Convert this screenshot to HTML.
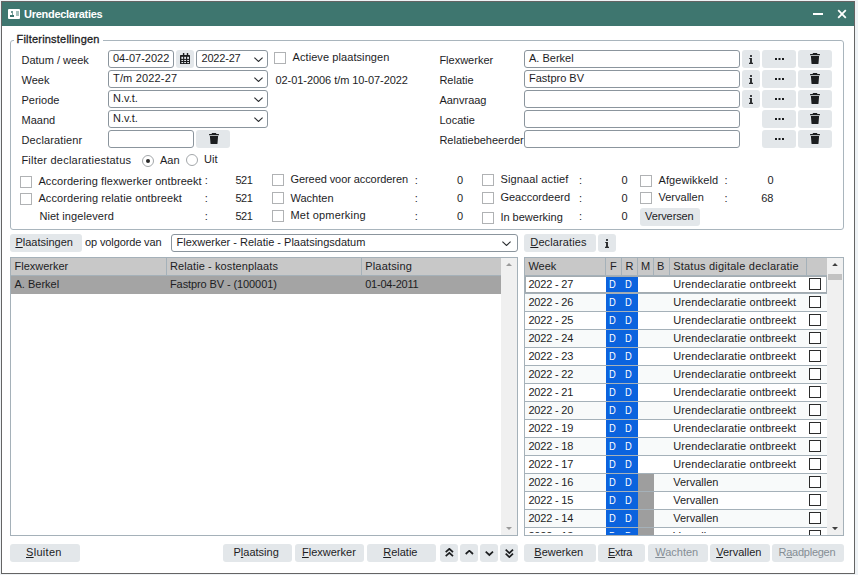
<!DOCTYPE html><html><head><meta charset="utf-8"><style>
html,body{margin:0;padding:0;}
body{width:858px;height:575px;position:relative;overflow:hidden;background:#eef2f5;font-family:"Liberation Sans",sans-serif;}
.win{position:absolute;left:1px;top:1px;width:852px;height:571px;border:1px solid #646464;background:#fff;}
.title{position:absolute;left:2px;top:2px;width:852px;height:24px;background:#3e766f;}
.t{position:absolute;font-size:11px;line-height:13px;white-space:nowrap;color:#1d1d1f;}
.b{font-weight:bold;}
.inp{position:absolute;box-sizing:border-box;border:1px solid #8b959d;border-radius:3px;background:#fff;}
.btn{position:absolute;box-sizing:border-box;background:#e3e7ea;border-radius:3px;}
.cb{position:absolute;box-sizing:border-box;border:1px solid #b0b2b4;background:#fff;}
.sv{position:absolute;}
.u{text-decoration:underline;text-underline-offset:1px;}
.dis{color:#858e95;}
.ln{position:absolute;background:#a5b1b9;}
.rad{position:absolute;box-sizing:border-box;width:12px;height:12px;border:1px solid #a3a7aa;border-radius:50%;background:#fff;}
</style></head><body>
<div class="win"></div>
<div class="title"></div>

<div style="position:absolute;left:8px;top:9px;width:12px;height:9.5px;background:#fff;border-radius:1px;"></div>
<div style="position:absolute;left:10.9px;top:11px;width:2.3px;height:2.3px;background:#3e766f;border-radius:50%;"></div>
<div style="position:absolute;left:11.5px;top:13px;width:1.2px;height:2.4px;background:#7fa39e;"></div>
<div style="position:absolute;left:10px;top:15.2px;width:4px;height:1.5px;background:#3e766f;"></div>
<div style="position:absolute;left:16.1px;top:11.3px;width:2.7px;height:4.4px;background:#a4c0bc;"></div>
<div class="t b" style="left:24px;top:8px;color:#fff;letter-spacing:-0.28px">Urendeclaraties</div>
<div style="position:absolute;left:813px;top:13px;width:10px;height:2px;background:#fff;"></div>
<svg class="sv" style="left:837px;top:9px" width="10" height="10" viewBox="0 0 10 10"><path d="M1.2 1.2L8.8 8.8M8.8 1.2L1.2 8.8" stroke="#fff" stroke-width="1.8"/></svg>
<div style="position:absolute;left:10px;top:40px;width:832px;height:188px;border:1px solid #a9b5bd;border-radius:3px;"></div>
<div style="position:absolute;left:14px;top:36px;width:89px;height:8px;background:#fff;"></div>
<div class="t " style="left:16.5px;top:33px;letter-spacing:0.2px;-webkit-text-stroke:0.3px #1d1d1f">Filterinstellingen</div>
<div class="t " style="left:21.5px;top:54px;">Datum / week</div>
<div class="t " style="left:21.5px;top:74px;">Week</div>
<div class="t " style="left:21.5px;top:94px;">Periode</div>
<div class="t " style="left:21.5px;top:114px;">Maand</div>
<div class="t " style="left:21.5px;top:134px;letter-spacing:0.12px">Declaratienr</div>
<div class="inp" style="left:108px;top:50px;width:66px;height:18px;"></div>
<div class="t " style="left:113px;top:52px;">04-07-2022</div>
<div class="btn" style="left:176px;top:50px;width:18px;height:18px;"></div>
<svg class="sv" style="left:180px;top:53px" width="10" height="11" viewBox="0 0 10 11"><rect x="0" y="2" width="10" height="9" rx="0.6" fill="#1b1d1f"/><rect x="2.9" y="0" width="1.4" height="2.5" fill="#1b1d1f"/><rect x="6.8" y="0" width="1.4" height="2.5" fill="#1b1d1f"/><g fill="#e3e7ea"><rect x="1.4" y="3.8" width="1.7" height="2.1"/><rect x="1.4" y="6.9" width="1.7" height="1.1"/><rect x="1.4" y="9" width="1.7" height="1.1"/><rect x="4.2" y="3.8" width="1.8" height="2.1"/><rect x="4.2" y="6.9" width="1.8" height="1.1"/><rect x="4.2" y="9" width="1.8" height="1.1"/><rect x="7.2" y="3.8" width="1.8" height="2.1"/><rect x="7.2" y="6.9" width="1.8" height="1.1"/><rect x="7.2" y="9" width="1.8" height="1.1"/></g></svg>
<div class="inp" style="left:196px;top:50px;width:72px;height:18px;"></div>
<div class="t " style="left:201.5px;top:52px;letter-spacing:-0.2px">2022-27</div>
<svg class="sv" style="left:254px;top:57px" width="9" height="5" viewBox="0 0 9 5"><path d="M0.4 0.6L4.5 4.5L8.6 0.6" fill="none" stroke="#2a2d30" stroke-width="1.1"/></svg>
<div class="inp" style="left:108px;top:70px;width:160px;height:18px;"></div>
<div class="t " style="left:113px;top:72px;letter-spacing:0.17px">T/m 2022-27</div>
<svg class="sv" style="left:254px;top:77px" width="9" height="5" viewBox="0 0 9 5"><path d="M0.4 0.6L4.5 4.5L8.6 0.6" fill="none" stroke="#2a2d30" stroke-width="1.1"/></svg>
<div class="inp" style="left:108px;top:90px;width:160px;height:18px;"></div>
<div class="t " style="left:113px;top:92px;">N.v.t.</div>
<svg class="sv" style="left:254px;top:97px" width="9" height="5" viewBox="0 0 9 5"><path d="M0.4 0.6L4.5 4.5L8.6 0.6" fill="none" stroke="#2a2d30" stroke-width="1.1"/></svg>
<div class="inp" style="left:108px;top:110px;width:160px;height:18px;"></div>
<div class="t " style="left:113px;top:112px;">N.v.t.</div>
<svg class="sv" style="left:254px;top:117px" width="9" height="5" viewBox="0 0 9 5"><path d="M0.4 0.6L4.5 4.5L8.6 0.6" fill="none" stroke="#2a2d30" stroke-width="1.1"/></svg>
<div class="inp" style="left:108px;top:130px;width:86px;height:18px;"></div>
<div class="btn" style="left:196px;top:130px;width:34px;height:18px;"></div>
<svg class="sv" style="left:208.5px;top:133px" width="10" height="11" viewBox="0 0 10 11"><path d="M3.3 0.1h3.4a0.6 0.6 0 0 1 0.6 0.6V1.1H9.6a0.4 0.4 0 0 1 0.4 0.4V2.3H0V1.5a0.4 0.4 0 0 1 0.4-0.4H2.7V0.7a0.6 0.6 0 0 1 0.6-0.6z M0.9 3H9.1L8.5 10.4a0.7 0.7 0 0 1-0.7 0.6H2.2a0.7 0.7 0 0 1-0.7-0.6z" fill="#1b1d1f"/></svg>
<div class="cb" style="left:274px;top:52px;width:12px;height:12px;"></div>
<div class="t " style="left:292.5px;top:51px;letter-spacing:0.08px">Actieve plaatsingen</div>
<div class="t " style="left:275.5px;top:74px;letter-spacing:-0.06px">02-01-2006 t/m 10-07-2022</div>
<div class="t " style="left:439.4px;top:54px;">Flexwerker</div>
<div class="inp" style="left:524px;top:50px;width:216px;height:18px;"></div>
<div class="btn" style="left:742px;top:50px;width:18px;height:18px;"></div>
<svg class="sv" style="left:749px;top:55px" width="4" height="9" viewBox="0 0 4 9"><rect x="1" y="0" width="2" height="2" fill="#404347"/><rect x="0" y="3" width="2" height="1" fill="#505357"/><rect x="1.1" y="3" width="1.8" height="6" fill="#1b1d1f"/><rect x="0" y="7.7" width="4" height="1.3" fill="#2a2c2f"/></svg>
<div class="btn" style="left:762px;top:50px;width:34px;height:18px;"></div>
<svg class="sv" style="left:775px;top:58px" width="9" height="2" viewBox="0 0 9 2"><rect x="0" y="0" width="2" height="2" fill="#1b1d1f"/><rect x="3.5" y="0" width="2" height="2" fill="#1b1d1f"/><rect x="7" y="0" width="2" height="2" fill="#1b1d1f"/></svg>
<div class="btn" style="left:798px;top:50px;width:34px;height:18px;"></div>
<svg class="sv" style="left:810px;top:53px" width="10" height="11" viewBox="0 0 10 11"><path d="M3.3 0.1h3.4a0.6 0.6 0 0 1 0.6 0.6V1.1H9.6a0.4 0.4 0 0 1 0.4 0.4V2.3H0V1.5a0.4 0.4 0 0 1 0.4-0.4H2.7V0.7a0.6 0.6 0 0 1 0.6-0.6z M0.9 3H9.1L8.5 10.4a0.7 0.7 0 0 1-0.7 0.6H2.2a0.7 0.7 0 0 1-0.7-0.6z" fill="#1b1d1f"/></svg>
<div class="t " style="left:439.4px;top:74px;">Relatie</div>
<div class="inp" style="left:524px;top:70px;width:216px;height:18px;"></div>
<div class="btn" style="left:742px;top:70px;width:18px;height:18px;"></div>
<svg class="sv" style="left:749px;top:75px" width="4" height="9" viewBox="0 0 4 9"><rect x="1" y="0" width="2" height="2" fill="#404347"/><rect x="0" y="3" width="2" height="1" fill="#505357"/><rect x="1.1" y="3" width="1.8" height="6" fill="#1b1d1f"/><rect x="0" y="7.7" width="4" height="1.3" fill="#2a2c2f"/></svg>
<div class="btn" style="left:762px;top:70px;width:34px;height:18px;"></div>
<svg class="sv" style="left:775px;top:78px" width="9" height="2" viewBox="0 0 9 2"><rect x="0" y="0" width="2" height="2" fill="#1b1d1f"/><rect x="3.5" y="0" width="2" height="2" fill="#1b1d1f"/><rect x="7" y="0" width="2" height="2" fill="#1b1d1f"/></svg>
<div class="btn" style="left:798px;top:70px;width:34px;height:18px;"></div>
<svg class="sv" style="left:810px;top:73px" width="10" height="11" viewBox="0 0 10 11"><path d="M3.3 0.1h3.4a0.6 0.6 0 0 1 0.6 0.6V1.1H9.6a0.4 0.4 0 0 1 0.4 0.4V2.3H0V1.5a0.4 0.4 0 0 1 0.4-0.4H2.7V0.7a0.6 0.6 0 0 1 0.6-0.6z M0.9 3H9.1L8.5 10.4a0.7 0.7 0 0 1-0.7 0.6H2.2a0.7 0.7 0 0 1-0.7-0.6z" fill="#1b1d1f"/></svg>
<div class="t " style="left:439.4px;top:94px;">Aanvraag</div>
<div class="inp" style="left:524px;top:90px;width:216px;height:18px;"></div>
<div class="btn" style="left:742px;top:90px;width:18px;height:18px;"></div>
<svg class="sv" style="left:749px;top:95px" width="4" height="9" viewBox="0 0 4 9"><rect x="1" y="0" width="2" height="2" fill="#404347"/><rect x="0" y="3" width="2" height="1" fill="#505357"/><rect x="1.1" y="3" width="1.8" height="6" fill="#1b1d1f"/><rect x="0" y="7.7" width="4" height="1.3" fill="#2a2c2f"/></svg>
<div class="btn" style="left:762px;top:90px;width:34px;height:18px;"></div>
<svg class="sv" style="left:775px;top:98px" width="9" height="2" viewBox="0 0 9 2"><rect x="0" y="0" width="2" height="2" fill="#1b1d1f"/><rect x="3.5" y="0" width="2" height="2" fill="#1b1d1f"/><rect x="7" y="0" width="2" height="2" fill="#1b1d1f"/></svg>
<div class="btn" style="left:798px;top:90px;width:34px;height:18px;"></div>
<svg class="sv" style="left:810px;top:93px" width="10" height="11" viewBox="0 0 10 11"><path d="M3.3 0.1h3.4a0.6 0.6 0 0 1 0.6 0.6V1.1H9.6a0.4 0.4 0 0 1 0.4 0.4V2.3H0V1.5a0.4 0.4 0 0 1 0.4-0.4H2.7V0.7a0.6 0.6 0 0 1 0.6-0.6z M0.9 3H9.1L8.5 10.4a0.7 0.7 0 0 1-0.7 0.6H2.2a0.7 0.7 0 0 1-0.7-0.6z" fill="#1b1d1f"/></svg>
<div class="t " style="left:439.4px;top:114px;">Locatie</div>
<div class="inp" style="left:524px;top:110px;width:216px;height:18px;"></div>
<div class="btn" style="left:762px;top:110px;width:34px;height:18px;"></div>
<svg class="sv" style="left:775px;top:118px" width="9" height="2" viewBox="0 0 9 2"><rect x="0" y="0" width="2" height="2" fill="#1b1d1f"/><rect x="3.5" y="0" width="2" height="2" fill="#1b1d1f"/><rect x="7" y="0" width="2" height="2" fill="#1b1d1f"/></svg>
<div class="btn" style="left:798px;top:110px;width:34px;height:18px;"></div>
<svg class="sv" style="left:810px;top:113px" width="10" height="11" viewBox="0 0 10 11"><path d="M3.3 0.1h3.4a0.6 0.6 0 0 1 0.6 0.6V1.1H9.6a0.4 0.4 0 0 1 0.4 0.4V2.3H0V1.5a0.4 0.4 0 0 1 0.4-0.4H2.7V0.7a0.6 0.6 0 0 1 0.6-0.6z M0.9 3H9.1L8.5 10.4a0.7 0.7 0 0 1-0.7 0.6H2.2a0.7 0.7 0 0 1-0.7-0.6z" fill="#1b1d1f"/></svg>
<div class="t " style="left:439.4px;top:134px;">Relatiebeheerder</div>
<div class="inp" style="left:524px;top:130px;width:216px;height:18px;"></div>
<div class="btn" style="left:762px;top:130px;width:34px;height:18px;"></div>
<svg class="sv" style="left:775px;top:138px" width="9" height="2" viewBox="0 0 9 2"><rect x="0" y="0" width="2" height="2" fill="#1b1d1f"/><rect x="3.5" y="0" width="2" height="2" fill="#1b1d1f"/><rect x="7" y="0" width="2" height="2" fill="#1b1d1f"/></svg>
<div class="btn" style="left:798px;top:130px;width:34px;height:18px;"></div>
<svg class="sv" style="left:810px;top:133px" width="10" height="11" viewBox="0 0 10 11"><path d="M3.3 0.1h3.4a0.6 0.6 0 0 1 0.6 0.6V1.1H9.6a0.4 0.4 0 0 1 0.4 0.4V2.3H0V1.5a0.4 0.4 0 0 1 0.4-0.4H2.7V0.7a0.6 0.6 0 0 1 0.6-0.6z M0.9 3H9.1L8.5 10.4a0.7 0.7 0 0 1-0.7 0.6H2.2a0.7 0.7 0 0 1-0.7-0.6z" fill="#1b1d1f"/></svg>
<div class="t " style="left:529px;top:52px;">A. Berkel</div>
<div class="t " style="left:529px;top:72px;">Fastpro BV</div>
<div class="t " style="left:21.4px;top:154px;letter-spacing:0.23px">Filter declaratiestatus</div>
<div class="rad" style="left:142px;top:155px;"></div>
<div style="position:absolute;left:145.8px;top:158.8px;width:4.4px;height:4.4px;border-radius:50%;background:#2a2a2a;"></div>
<div class="t " style="left:160px;top:154px;">Aan</div>
<div class="rad" style="left:186px;top:154px;"></div>
<div class="t " style="left:204px;top:153px;">Uit</div>
<div class="cb" style="left:20px;top:176px;width:12px;height:12px;"></div>
<div class="t " style="left:38.4px;top:175px;letter-spacing:0.08px">Accordering flexwerker ontbreekt</div>
<div class="cb" style="left:20px;top:193px;width:12px;height:12px;"></div>
<div class="t " style="left:38.4px;top:192px;letter-spacing:0.1px">Accordering relatie ontbreekt</div>
<div class="t " style="left:39.4px;top:210px;letter-spacing:0.07px">Niet ingeleverd</div>
<div class="t " style="left:204.7px;top:174px;">:</div>
<div class="t " style="left:235.5px;top:174px;letter-spacing:-0.5px">521</div>
<div class="t " style="left:204.7px;top:192px;">:</div>
<div class="t " style="left:235.5px;top:192px;letter-spacing:-0.5px">521</div>
<div class="t " style="left:204.7px;top:210px;">:</div>
<div class="t " style="left:235.5px;top:210px;letter-spacing:-0.5px">521</div>
<div class="cb" style="left:272px;top:174px;width:12px;height:12px;"></div>
<div class="t " style="left:290.5px;top:173px;letter-spacing:-0.08px">Gereed voor accorderen</div>
<div class="t " style="left:414.7px;top:174px;">:</div>
<div class="t " style="left:457px;top:174px;">0</div>
<div class="cb" style="left:272px;top:192px;width:12px;height:12px;"></div>
<div class="t " style="left:290.5px;top:192px;">Wachten</div>
<div class="t " style="left:414.7px;top:192px;">:</div>
<div class="t " style="left:457px;top:192px;">0</div>
<div class="cb" style="left:272px;top:210px;width:12px;height:12px;"></div>
<div class="t " style="left:290.5px;top:209px;letter-spacing:0.2px">Met opmerking</div>
<div class="t " style="left:414.7px;top:210px;">:</div>
<div class="t " style="left:457px;top:210px;">0</div>
<div class="cb" style="left:482px;top:174px;width:12px;height:12px;"></div>
<div class="t " style="left:500.4px;top:173px;letter-spacing:0.15px">Signaal actief</div>
<div class="t " style="left:578.9px;top:174px;">:</div>
<div class="t " style="left:621.5px;top:174px;">0</div>
<div class="cb" style="left:482px;top:192px;width:12px;height:12px;"></div>
<div class="t " style="left:500.4px;top:191px;">Geaccordeerd</div>
<div class="t " style="left:578.9px;top:192px;">:</div>
<div class="t " style="left:621.5px;top:192px;">0</div>
<div class="cb" style="left:482px;top:212px;width:12px;height:12px;"></div>
<div class="t " style="left:500.4px;top:211px;">In bewerking</div>
<div class="t " style="left:578.9px;top:210px;">:</div>
<div class="t " style="left:621.5px;top:210px;">0</div>
<div class="cb" style="left:640px;top:175px;width:12px;height:12px;"></div>
<div class="t " style="left:658.5px;top:174px;letter-spacing:0.1px">Afgewikkeld</div>
<div class="t " style="left:724.5px;top:174px;">:</div>
<div class="t" style="left:700px;width:73.5px;text-align:right;top:174px">0</div>
<div class="cb" style="left:640px;top:192px;width:12px;height:12px;"></div>
<div class="t " style="left:658.5px;top:191px;">Vervallen</div>
<div class="t " style="left:724.5px;top:192px;">:</div>
<div class="t" style="left:700px;width:73.5px;text-align:right;top:192px">68</div>
<div class="btn" style="left:640px;top:208px;width:60px;height:18px;"></div>
<div class="t " style="left:645px;top:210px;letter-spacing:-0.1px">Verversen</div>
<div class="btn" style="left:10px;top:234px;width:72px;height:18px;"></div>
<div class="t " style="left:15.4px;top:236px;"><span class="u">P</span>laatsingen</div>
<div class="t " style="left:85px;top:236px;letter-spacing:-0.12px">op volgorde van</div>
<div class="inp" style="left:171px;top:234px;width:347px;height:18px;"></div>
<div class="t " style="left:176.5px;top:236px;">Flexwerker - Relatie - Plaatsingsdatum</div>
<svg class="sv" style="left:502px;top:241px" width="9" height="5" viewBox="0 0 9 5"><path d="M0.4 0.6L4.5 4.5L8.6 0.6" fill="none" stroke="#2a2d30" stroke-width="1.1"/></svg>
<div class="btn" style="left:524px;top:234px;width:72px;height:18px;"></div>
<div class="t " style="left:530.3px;top:236px;letter-spacing:0.13px"><span class="u">D</span>eclaraties</div>
<div class="btn" style="left:598px;top:234px;width:18px;height:18px;"></div>
<svg class="sv" style="left:605px;top:239px" width="4" height="9" viewBox="0 0 4 9"><rect x="1" y="0" width="2" height="2" fill="#404347"/><rect x="0" y="3" width="2" height="1" fill="#505357"/><rect x="1.1" y="3" width="1.8" height="6" fill="#1b1d1f"/><rect x="0" y="7.7" width="4" height="1.3" fill="#2a2c2f"/></svg>
<div style="position:absolute;left:10px;top:257px;width:506px;height:277px;border:1px solid #a5b1b9;background:#fff;"></div>
<div style="position:absolute;left:11px;top:258px;width:490px;height:17px;background:#c8c8c8;"></div>
<div class="ln" style="left:166px;top:258px;width:1px;height:17px;"></div>
<div class="ln" style="left:361px;top:258px;width:1px;height:17px;"></div>
<div style="position:absolute;left:501px;top:258px;width:16px;height:277px;background:#f0f0f0;"></div>
<div style="position:absolute;left:11px;top:276px;width:490px;height:18px;background:#a4a4a4;"></div>
<div class="ln" style="left:11px;top:275px;width:490px;height:1px;"></div>
<div class="t " style="left:14.5px;top:260px;">Flexwerker</div>
<div class="t " style="left:170px;top:260px;letter-spacing:0.1px">Relatie - kostenplaats</div>
<div class="t " style="left:365.2px;top:260px;letter-spacing:0.18px">Plaatsing</div>
<div class="t " style="left:14.5px;top:278px;">A. Berkel</div>
<div class="t " style="left:170px;top:278px;letter-spacing:-0.1px">Fastpro BV - (100001)</div>
<div class="t " style="left:365.2px;top:278px;letter-spacing:-0.22px">01-04-2011</div>
<svg class="sv" style="left:505.5px;top:263px" width="6" height="3"><path d="M0 3L3 0L6 3z" fill="#9a9a9a"/></svg>
<svg class="sv" style="left:505.5px;top:527px" width="6" height="3"><path d="M0 0L3 3L6 0z" fill="#9a9a9a"/></svg>
<div style="position:absolute;left:524px;top:257px;width:318px;height:277px;border:1px solid #a5b1b9;background:#fff;overflow:hidden;"></div>
<div style="position:absolute;left:525px;top:258px;width:302px;height:17px;background:#c8c8c8;"></div>
<div class="ln" style="left:605px;top:258px;width:1px;height:17px;"></div>
<div class="ln" style="left:621px;top:258px;width:1px;height:17px;"></div>
<div class="ln" style="left:637px;top:258px;width:1px;height:17px;"></div>
<div class="ln" style="left:653px;top:258px;width:1px;height:17px;"></div>
<div class="ln" style="left:669px;top:258px;width:1px;height:17px;"></div>
<div class="ln" style="left:806px;top:258px;width:1px;height:17px;"></div>
<div style="position:absolute;left:827px;top:258px;width:16px;height:277px;background:#f0f0f0;"></div>
<svg class="sv" style="left:831.5px;top:263px" width="6" height="3.2"><path d="M0 3.2L3 0L6 3.2z" fill="#404040"/></svg>
<svg class="sv" style="left:831.5px;top:527px" width="6" height="3.2"><path d="M0 0L3 3.2L6 0z" fill="#404040"/></svg>
<div style="position:absolute;left:828px;top:274px;width:14px;height:6px;background:#c2c2c2;"></div>
<div class="t " style="left:528.4px;top:260px;">Week</div>
<div class="t " style="left:610px;top:260px;">F</div>
<div class="t " style="left:625.5px;top:260px;">R</div>
<div class="t " style="left:641px;top:260px;">M</div>
<div class="t " style="left:657px;top:260px;">B</div>
<div class="t " style="left:673.2px;top:260px;letter-spacing:0.22px">Status digitale declaratie</div>
<div class="ln" style="left:525px;top:275px;width:302px;height:1px;"></div>
<div style="position:absolute;left:525px;top:276px;width:302px;height:259px;overflow:hidden;">
<div class="ln" style="left:0;top:17px;width:302px;height:1px;"></div>
<div style="position:absolute;left:81px;top:1px;width:32px;height:15px;background:#0b63de;"></div>
<div style="position:absolute;left:284px;top:2px;width:12px;height:12px;box-sizing:border-box;border:1.5px solid #2b2b2b;background:#fff;"></div>
<div style="position:absolute;left:0;top:18px;width:302px;height:17px;background:#f8fafa;"></div>
<div class="ln" style="left:0;top:35px;width:302px;height:1px;"></div>
<div style="position:absolute;left:81px;top:18px;width:32px;height:17px;background:#0b63de;"></div>
<div style="position:absolute;left:284px;top:20px;width:12px;height:12px;box-sizing:border-box;border:1.5px solid #2b2b2b;background:#fff;"></div>
<div class="ln" style="left:0;top:53px;width:302px;height:1px;"></div>
<div style="position:absolute;left:81px;top:36px;width:32px;height:17px;background:#0b63de;"></div>
<div style="position:absolute;left:284px;top:38px;width:12px;height:12px;box-sizing:border-box;border:1.5px solid #2b2b2b;background:#fff;"></div>
<div style="position:absolute;left:0;top:54px;width:302px;height:17px;background:#f8fafa;"></div>
<div class="ln" style="left:0;top:71px;width:302px;height:1px;"></div>
<div style="position:absolute;left:81px;top:54px;width:32px;height:17px;background:#0b63de;"></div>
<div style="position:absolute;left:284px;top:56px;width:12px;height:12px;box-sizing:border-box;border:1.5px solid #2b2b2b;background:#fff;"></div>
<div class="ln" style="left:0;top:89px;width:302px;height:1px;"></div>
<div style="position:absolute;left:81px;top:72px;width:32px;height:17px;background:#0b63de;"></div>
<div style="position:absolute;left:284px;top:74px;width:12px;height:12px;box-sizing:border-box;border:1.5px solid #2b2b2b;background:#fff;"></div>
<div style="position:absolute;left:0;top:90px;width:302px;height:17px;background:#f8fafa;"></div>
<div class="ln" style="left:0;top:107px;width:302px;height:1px;"></div>
<div style="position:absolute;left:81px;top:90px;width:32px;height:17px;background:#0b63de;"></div>
<div style="position:absolute;left:284px;top:92px;width:12px;height:12px;box-sizing:border-box;border:1.5px solid #2b2b2b;background:#fff;"></div>
<div class="ln" style="left:0;top:125px;width:302px;height:1px;"></div>
<div style="position:absolute;left:81px;top:108px;width:32px;height:17px;background:#0b63de;"></div>
<div style="position:absolute;left:284px;top:110px;width:12px;height:12px;box-sizing:border-box;border:1.5px solid #2b2b2b;background:#fff;"></div>
<div style="position:absolute;left:0;top:126px;width:302px;height:17px;background:#f8fafa;"></div>
<div class="ln" style="left:0;top:143px;width:302px;height:1px;"></div>
<div style="position:absolute;left:81px;top:126px;width:32px;height:17px;background:#0b63de;"></div>
<div style="position:absolute;left:284px;top:128px;width:12px;height:12px;box-sizing:border-box;border:1.5px solid #2b2b2b;background:#fff;"></div>
<div class="ln" style="left:0;top:161px;width:302px;height:1px;"></div>
<div style="position:absolute;left:81px;top:144px;width:32px;height:17px;background:#0b63de;"></div>
<div style="position:absolute;left:284px;top:146px;width:12px;height:12px;box-sizing:border-box;border:1.5px solid #2b2b2b;background:#fff;"></div>
<div style="position:absolute;left:0;top:162px;width:302px;height:17px;background:#f8fafa;"></div>
<div class="ln" style="left:0;top:179px;width:302px;height:1px;"></div>
<div style="position:absolute;left:81px;top:162px;width:32px;height:17px;background:#0b63de;"></div>
<div style="position:absolute;left:284px;top:164px;width:12px;height:12px;box-sizing:border-box;border:1.5px solid #2b2b2b;background:#fff;"></div>
<div class="ln" style="left:0;top:197px;width:302px;height:1px;"></div>
<div style="position:absolute;left:81px;top:180px;width:32px;height:17px;background:#0b63de;"></div>
<div style="position:absolute;left:284px;top:182px;width:12px;height:12px;box-sizing:border-box;border:1.5px solid #2b2b2b;background:#fff;"></div>
<div style="position:absolute;left:0;top:198px;width:302px;height:17px;background:#f8fafa;"></div>
<div class="ln" style="left:0;top:215px;width:302px;height:1px;"></div>
<div style="position:absolute;left:81px;top:198px;width:32px;height:17px;background:#0b63de;"></div>
<div style="position:absolute;left:113px;top:198px;width:16px;height:17px;background:#9e9e9e;"></div>
<div style="position:absolute;left:284px;top:200px;width:12px;height:12px;box-sizing:border-box;border:1.5px solid #2b2b2b;background:#fff;"></div>
<div class="ln" style="left:0;top:233px;width:302px;height:1px;"></div>
<div style="position:absolute;left:81px;top:216px;width:32px;height:17px;background:#0b63de;"></div>
<div style="position:absolute;left:113px;top:216px;width:16px;height:17px;background:#9e9e9e;"></div>
<div style="position:absolute;left:284px;top:218px;width:12px;height:12px;box-sizing:border-box;border:1.5px solid #2b2b2b;background:#fff;"></div>
<div style="position:absolute;left:0;top:234px;width:302px;height:17px;background:#f8fafa;"></div>
<div class="ln" style="left:0;top:251px;width:302px;height:1px;"></div>
<div style="position:absolute;left:81px;top:234px;width:32px;height:17px;background:#0b63de;"></div>
<div style="position:absolute;left:113px;top:234px;width:16px;height:17px;background:#9e9e9e;"></div>
<div style="position:absolute;left:284px;top:236px;width:12px;height:12px;box-sizing:border-box;border:1.5px solid #2b2b2b;background:#fff;"></div>
<div class="ln" style="left:0;top:269px;width:302px;height:1px;"></div>
<div style="position:absolute;left:81px;top:252px;width:32px;height:17px;background:#0b63de;"></div>
<div style="position:absolute;left:113px;top:252px;width:16px;height:17px;background:#9e9e9e;"></div>
<div style="position:absolute;left:284px;top:254px;width:12px;height:12px;box-sizing:border-box;border:1.5px solid #2b2b2b;background:#fff;"></div>
<div style="position:absolute;left:0;top:0;width:302px;height:17px;box-sizing:border-box;border:1px solid #a3abb0;"></div>
</div>
<div style="position:absolute;left:525px;top:276px;width:302px;height:257px;overflow:hidden;">
<div class="t" style="left:3.4px;top:2px;letter-spacing:-0.2px">2022 - 27</div>
<div class="t" style="left:84px;top:2px;color:#fff;transform:scaleX(0.85);transform-origin:0 0">D</div>
<div class="t" style="left:100px;top:2px;color:#fff;transform:scaleX(0.85);transform-origin:0 0">D</div>
<div class="t" style="left:148.2px;top:2px;letter-spacing:0.11px">Urendeclaratie ontbreekt</div>
<div class="t" style="left:3.4px;top:20px;letter-spacing:-0.2px">2022 - 26</div>
<div class="t" style="left:84px;top:20px;color:#fff;transform:scaleX(0.85);transform-origin:0 0">D</div>
<div class="t" style="left:100px;top:20px;color:#fff;transform:scaleX(0.85);transform-origin:0 0">D</div>
<div class="t" style="left:148.2px;top:20px;letter-spacing:0.11px">Urendeclaratie ontbreekt</div>
<div class="t" style="left:3.4px;top:38px;letter-spacing:-0.2px">2022 - 25</div>
<div class="t" style="left:84px;top:38px;color:#fff;transform:scaleX(0.85);transform-origin:0 0">D</div>
<div class="t" style="left:100px;top:38px;color:#fff;transform:scaleX(0.85);transform-origin:0 0">D</div>
<div class="t" style="left:148.2px;top:38px;letter-spacing:0.11px">Urendeclaratie ontbreekt</div>
<div class="t" style="left:3.4px;top:56px;letter-spacing:-0.2px">2022 - 24</div>
<div class="t" style="left:84px;top:56px;color:#fff;transform:scaleX(0.85);transform-origin:0 0">D</div>
<div class="t" style="left:100px;top:56px;color:#fff;transform:scaleX(0.85);transform-origin:0 0">D</div>
<div class="t" style="left:148.2px;top:56px;letter-spacing:0.11px">Urendeclaratie ontbreekt</div>
<div class="t" style="left:3.4px;top:74px;letter-spacing:-0.2px">2022 - 23</div>
<div class="t" style="left:84px;top:74px;color:#fff;transform:scaleX(0.85);transform-origin:0 0">D</div>
<div class="t" style="left:100px;top:74px;color:#fff;transform:scaleX(0.85);transform-origin:0 0">D</div>
<div class="t" style="left:148.2px;top:74px;letter-spacing:0.11px">Urendeclaratie ontbreekt</div>
<div class="t" style="left:3.4px;top:92px;letter-spacing:-0.2px">2022 - 22</div>
<div class="t" style="left:84px;top:92px;color:#fff;transform:scaleX(0.85);transform-origin:0 0">D</div>
<div class="t" style="left:100px;top:92px;color:#fff;transform:scaleX(0.85);transform-origin:0 0">D</div>
<div class="t" style="left:148.2px;top:92px;letter-spacing:0.11px">Urendeclaratie ontbreekt</div>
<div class="t" style="left:3.4px;top:110px;letter-spacing:-0.2px">2022 - 21</div>
<div class="t" style="left:84px;top:110px;color:#fff;transform:scaleX(0.85);transform-origin:0 0">D</div>
<div class="t" style="left:100px;top:110px;color:#fff;transform:scaleX(0.85);transform-origin:0 0">D</div>
<div class="t" style="left:148.2px;top:110px;letter-spacing:0.11px">Urendeclaratie ontbreekt</div>
<div class="t" style="left:3.4px;top:128px;letter-spacing:-0.2px">2022 - 20</div>
<div class="t" style="left:84px;top:128px;color:#fff;transform:scaleX(0.85);transform-origin:0 0">D</div>
<div class="t" style="left:100px;top:128px;color:#fff;transform:scaleX(0.85);transform-origin:0 0">D</div>
<div class="t" style="left:148.2px;top:128px;letter-spacing:0.11px">Urendeclaratie ontbreekt</div>
<div class="t" style="left:3.4px;top:146px;letter-spacing:-0.2px">2022 - 19</div>
<div class="t" style="left:84px;top:146px;color:#fff;transform:scaleX(0.85);transform-origin:0 0">D</div>
<div class="t" style="left:100px;top:146px;color:#fff;transform:scaleX(0.85);transform-origin:0 0">D</div>
<div class="t" style="left:148.2px;top:146px;letter-spacing:0.11px">Urendeclaratie ontbreekt</div>
<div class="t" style="left:3.4px;top:164px;letter-spacing:-0.2px">2022 - 18</div>
<div class="t" style="left:84px;top:164px;color:#fff;transform:scaleX(0.85);transform-origin:0 0">D</div>
<div class="t" style="left:100px;top:164px;color:#fff;transform:scaleX(0.85);transform-origin:0 0">D</div>
<div class="t" style="left:148.2px;top:164px;letter-spacing:0.11px">Urendeclaratie ontbreekt</div>
<div class="t" style="left:3.4px;top:182px;letter-spacing:-0.2px">2022 - 17</div>
<div class="t" style="left:84px;top:182px;color:#fff;transform:scaleX(0.85);transform-origin:0 0">D</div>
<div class="t" style="left:100px;top:182px;color:#fff;transform:scaleX(0.85);transform-origin:0 0">D</div>
<div class="t" style="left:148.2px;top:182px;letter-spacing:0.11px">Urendeclaratie ontbreekt</div>
<div class="t" style="left:3.4px;top:200px;letter-spacing:-0.2px">2022 - 16</div>
<div class="t" style="left:84px;top:200px;color:#fff;transform:scaleX(0.85);transform-origin:0 0">D</div>
<div class="t" style="left:100px;top:200px;color:#fff;transform:scaleX(0.85);transform-origin:0 0">D</div>
<div class="t" style="left:148.2px;top:200px;letter-spacing:0px">Vervallen</div>
<div class="t" style="left:3.4px;top:218px;letter-spacing:-0.2px">2022 - 15</div>
<div class="t" style="left:84px;top:218px;color:#fff;transform:scaleX(0.85);transform-origin:0 0">D</div>
<div class="t" style="left:100px;top:218px;color:#fff;transform:scaleX(0.85);transform-origin:0 0">D</div>
<div class="t" style="left:148.2px;top:218px;letter-spacing:0px">Vervallen</div>
<div class="t" style="left:3.4px;top:236px;letter-spacing:-0.2px">2022 - 14</div>
<div class="t" style="left:84px;top:236px;color:#fff;transform:scaleX(0.85);transform-origin:0 0">D</div>
<div class="t" style="left:100px;top:236px;color:#fff;transform:scaleX(0.85);transform-origin:0 0">D</div>
<div class="t" style="left:148.2px;top:236px;letter-spacing:0px">Vervallen</div>
<div class="t" style="left:3.4px;top:254px;letter-spacing:-0.2px">2022 - 13</div>
<div class="t" style="left:84px;top:254px;color:#fff;transform:scaleX(0.85);transform-origin:0 0">D</div>
<div class="t" style="left:100px;top:254px;color:#fff;transform:scaleX(0.85);transform-origin:0 0">D</div>
<div class="t" style="left:148.2px;top:254px;letter-spacing:0px">Vervallen</div>
</div>
<div class="btn" style="left:10px;top:544px;width:70px;height:18px;"></div>
<div class="t " style="left:26px;top:546px;letter-spacing:0.3px"><span class="u">S</span>luiten</div>
<div class="btn" style="left:223px;top:544px;width:69px;height:18px;"></div>
<div class="t " style="left:233.5px;top:546px;">P<span class="u">l</span>aatsing</div>
<div class="btn" style="left:295px;top:544px;width:69px;height:18px;"></div>
<div class="t " style="left:302px;top:546px;"><span class="u">F</span>lexwerker</div>
<div class="btn" style="left:367px;top:544px;width:69px;height:18px;"></div>
<div class="t " style="left:383.2px;top:546px;"><span class="u">R</span>elatie</div>
<div class="btn" style="left:440px;top:544px;width:18px;height:18px;"></div>
<svg class="sv" style="left:445px;top:548px" width="9" height="9" viewBox="0 0 9 9"><path d="M0.7 4.2L4.35 0.8L8 4.2M0.7 8.2L4.35 4.8L8 8.2" fill="none" stroke="#1b1d1f" stroke-width="1.7"/></svg>
<div class="btn" style="left:460px;top:544px;width:18px;height:18px;"></div>
<svg class="sv" style="left:465px;top:550px" width="9" height="9" viewBox="0 0 9 9"><path d="M0.7 4L4.35 0.7L8 4" fill="none" stroke="#1b1d1f" stroke-width="1.7"/></svg>
<div class="btn" style="left:480px;top:544px;width:18px;height:18px;"></div>
<svg class="sv" style="left:485px;top:551px" width="9" height="9" viewBox="0 0 9 9"><path d="M0.7 0.7L4.35 4L8 0.7" fill="none" stroke="#1b1d1f" stroke-width="1.7"/></svg>
<div class="btn" style="left:500px;top:544px;width:18px;height:18px;"></div>
<svg class="sv" style="left:505px;top:549px" width="9" height="9" viewBox="0 0 9 9"><path d="M0.7 0.7L4.35 4.1L8 0.7M0.7 4.7L4.35 8.1L8 4.7" fill="none" stroke="#1b1d1f" stroke-width="1.7"/></svg>
<div class="btn" style="left:524px;top:544px;width:72px;height:18px;"></div>
<div class="t " style="left:534.3px;top:546px;"><span class="u">B</span>ewerken</div>
<div class="btn" style="left:598px;top:544px;width:47px;height:18px;"></div>
<div class="t " style="left:608px;top:546px;letter-spacing:-0.3px"><span class="u">E</span>xtra</div>
<div class="btn" style="left:648px;top:544px;width:60px;height:18px;"></div>
<div class="t dis" style="left:655.2px;top:546px;"><span class="u">W</span>achten</div>
<div class="btn" style="left:710px;top:544px;width:60px;height:18px;"></div>
<div class="t " style="left:716.2px;top:546px;"><span class="u">V</span>ervallen</div>
<div class="btn" style="left:772px;top:544px;width:72px;height:18px;"></div>
<div class="t dis" style="left:778.5px;top:546px;letter-spacing:-0.25px">R<span class="u">a</span>adplegen</div>
</body></html>
